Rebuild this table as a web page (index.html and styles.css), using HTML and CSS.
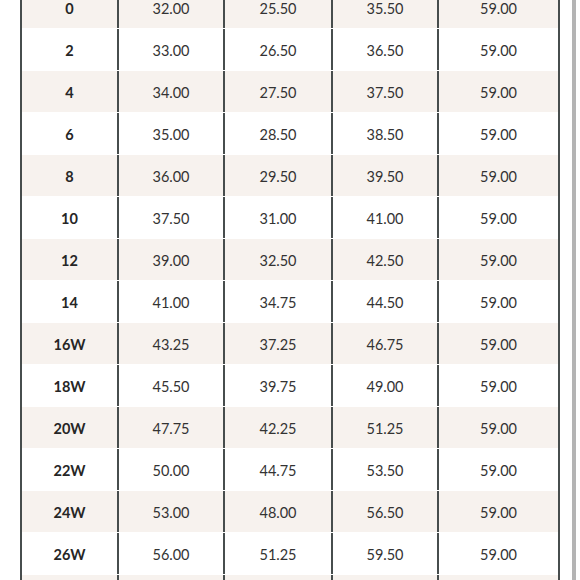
FILE: index.html
```html
<!DOCTYPE html>
<html>
<head>
<meta charset="utf-8">
<link rel="stylesheet" href="styles.css">
</head>
<body>
<div class="page">
  <div class="sheet">
    <div class="row alt"><div class="cell size">0</div><div class="cell">32.00</div><div class="cell">25.50</div><div class="cell">35.50</div><div class="cell">59.00</div></div>
    <div class="row"><div class="cell size">2</div><div class="cell">33.00</div><div class="cell">26.50</div><div class="cell">36.50</div><div class="cell">59.00</div></div>
    <div class="row alt"><div class="cell size">4</div><div class="cell">34.00</div><div class="cell">27.50</div><div class="cell">37.50</div><div class="cell">59.00</div></div>
    <div class="row"><div class="cell size">6</div><div class="cell">35.00</div><div class="cell">28.50</div><div class="cell">38.50</div><div class="cell">59.00</div></div>
    <div class="row alt"><div class="cell size">8</div><div class="cell">36.00</div><div class="cell">29.50</div><div class="cell">39.50</div><div class="cell">59.00</div></div>
    <div class="row"><div class="cell size">10</div><div class="cell">37.50</div><div class="cell">31.00</div><div class="cell">41.00</div><div class="cell">59.00</div></div>
    <div class="row alt"><div class="cell size">12</div><div class="cell">39.00</div><div class="cell">32.50</div><div class="cell">42.50</div><div class="cell">59.00</div></div>
    <div class="row"><div class="cell size">14</div><div class="cell">41.00</div><div class="cell">34.75</div><div class="cell">44.50</div><div class="cell">59.00</div></div>
    <div class="row alt"><div class="cell size">16W</div><div class="cell">43.25</div><div class="cell">37.25</div><div class="cell">46.75</div><div class="cell">59.00</div></div>
    <div class="row"><div class="cell size">18W</div><div class="cell">45.50</div><div class="cell">39.75</div><div class="cell">49.00</div><div class="cell">59.00</div></div>
    <div class="row alt"><div class="cell size">20W</div><div class="cell">47.75</div><div class="cell">42.25</div><div class="cell">51.25</div><div class="cell">59.00</div></div>
    <div class="row"><div class="cell size">22W</div><div class="cell">50.00</div><div class="cell">44.75</div><div class="cell">53.50</div><div class="cell">59.00</div></div>
    <div class="row alt"><div class="cell size">24W</div><div class="cell">53.00</div><div class="cell">48.00</div><div class="cell">56.50</div><div class="cell">59.00</div></div>
    <div class="row"><div class="cell size">26W</div><div class="cell">56.00</div><div class="cell">51.25</div><div class="cell">59.50</div><div class="cell">59.00</div></div>
    <div class="row alt"><div class="cell size"></div><div class="cell"></div><div class="cell"></div><div class="cell"></div><div class="cell"></div></div>
  </div>
  <div class="edge"></div>
</div>
</body>
</html>
```
FILE: styles.css
```css
html, body {
  margin: 0;
  padding: 0;
  background: #ffffff;
  height: 100%;
  overflow: hidden;
}
.page {
  display: flex;
  height: 580px;
  padding-left: 20px;
  gap: 12px;
  font-family: Lato, "Open Sans", sans-serif;
  color: #333333;
  font-size: 14.5px;
}
.sheet {
  width: 536px;
  border-left: 2px solid #474d4d;
  border-right: 2px solid #474d4d;
  margin-top: -14px;
  flex: none;
}
.row {
  display: grid;
  grid-template-columns: 95px 106px 108px 106px 121px;
  height: 41px;
  border-top: 1px solid #ffffff;
  background: #ffffff;
}
.row.alt {
  background: #f7f2ee;
}
.cell {
  display: flex;
  align-items: center;
  justify-content: center;
  padding-top: 2px;
  border-left: 2px solid #474d4d;
}
.cell.size {
  border-left: none;
  font-weight: 700;
  color: #262626;
}
.edge {
  width: 4px;
  height: 100%;
  background: #b4b4b4;
  flex: none;
}
```
